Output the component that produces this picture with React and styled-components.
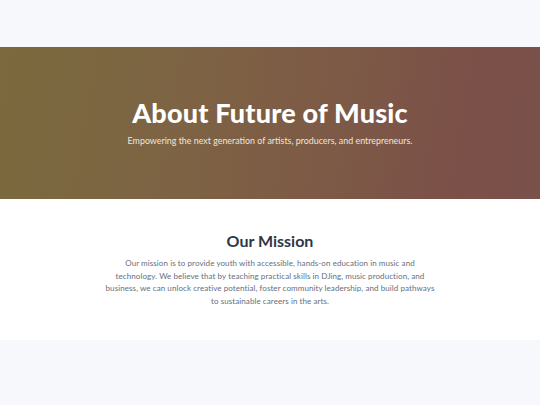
import React from 'react';
import styled, { createGlobalStyle } from 'styled-components';

const GlobalStyle = createGlobalStyle`
  html, body {
    margin: 0;
    padding: 0;
    background: #f7f8fc;
    font-family: "Lato", "Open Sans", sans-serif;
  }
`;

const Page = styled.div`
  padding-top: 47px;
  min-height: 405px;
  box-sizing: border-box;
`;

const Hero = styled.section`
  height: 152px;
  display: flex;
  flex-direction: column;
  align-items: center;
  justify-content: center;
  padding-bottom: 3px;
  box-sizing: border-box;
  background: linear-gradient(100deg, #7b6a3d 0%, #7d6344 35%, #7d5a46 60%, #7b5048 85%, #79514b 100%);
  color: #fff;
  text-align: center;
`;

const HeroTitle = styled.h1`
  margin: 0;
  font-size: 27px;
  font-weight: 900;
  letter-spacing: 0.2px;
  line-height: 1.2;
`;

const HeroSub = styled.p`
  margin: 5px 0 0;
  font-size: 8.9px;
  font-weight: 400;
  color: #ece6df;
`;

const Mission = styled.section`
  background: #fff;
  height: 141px;
  display: flex;
  flex-direction: column;
  align-items: center;
  padding-top: 32px;
  box-sizing: border-box;
  text-align: center;
`;

const MissionTitle = styled.h2`
  margin: 0;
  font-size: 16px;
  font-weight: 700;
  color: #2d3748;
  line-height: 20px;
`;

const MissionText = styled.p`
  margin: 6px 0 0;
  width: 330px;
  font-size: 8px;
  line-height: 12.7px;
  letter-spacing: 0.08px;
  color: #666e7c;
`;

export default function App() {
  return (
    <>
      <GlobalStyle />
      <Page>
        <Hero>
          <HeroTitle>About Future of Music</HeroTitle>
          <HeroSub>Empowering the next generation of artists, producers, and entrepreneurs.</HeroSub>
        </Hero>
        <Mission>
          <MissionTitle>Our Mission</MissionTitle>
          <MissionText>
            Our mission is to provide youth with accessible, hands-on education in music and
            technology. We believe that by teaching practical skills in DJing, music production, and
            business, we can unlock creative potential, foster community leadership, and build pathways
            to sustainable careers in the arts.
          </MissionText>
        </Mission>
      </Page>
    </>
  );
}
